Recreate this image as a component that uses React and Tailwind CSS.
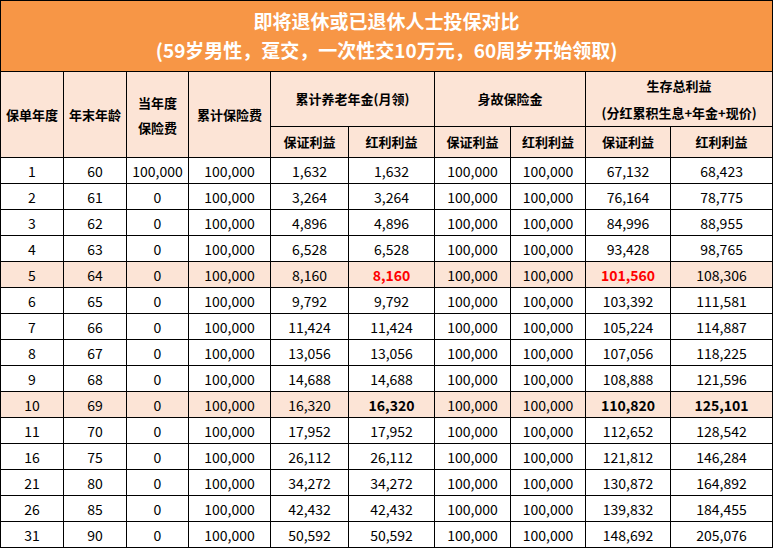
import React from 'react';

const rows = [
  ['1', '60', '100,000', '100,000', '1,632', '1,632', '100,000', '100,000', '67,132', '68,423'],
  ['2', '61', '0', '100,000', '3,264', '3,264', '100,000', '100,000', '76,164', '78,775'],
  ['3', '62', '0', '100,000', '4,896', '4,896', '100,000', '100,000', '84,996', '88,955'],
  ['4', '63', '0', '100,000', '6,528', '6,528', '100,000', '100,000', '93,428', '98,765'],
  ['5', '64', '0', '100,000', '8,160', '8,160', '100,000', '100,000', '101,560', '108,306'],
  ['6', '65', '0', '100,000', '9,792', '9,792', '100,000', '100,000', '103,392', '111,581'],
  ['7', '66', '0', '100,000', '11,424', '11,424', '100,000', '100,000', '105,224', '114,887'],
  ['8', '67', '0', '100,000', '13,056', '13,056', '100,000', '100,000', '107,056', '118,225'],
  ['9', '68', '0', '100,000', '14,688', '14,688', '100,000', '100,000', '108,888', '121,596'],
  ['10', '69', '0', '100,000', '16,320', '16,320', '100,000', '100,000', '110,820', '125,101'],
  ['11', '70', '0', '100,000', '17,952', '17,952', '100,000', '100,000', '112,652', '128,542'],
  ['16', '75', '0', '100,000', '26,112', '26,112', '100,000', '100,000', '121,812', '146,284'],
  ['21', '80', '0', '100,000', '34,272', '34,272', '100,000', '100,000', '130,872', '164,892'],
  ['26', '85', '0', '100,000', '42,432', '42,432', '100,000', '100,000', '139,832', '184,455'],
  ['31', '90', '0', '100,000', '50,592', '50,592', '100,000', '100,000', '148,692', '205,076'],
];

const widths = [63, 63, 62, 82, 78, 86, 76, 75, 85, 102];

// which cells are emphasised in the highlighted rows
const redCells = { '5': [5, 8] };
const boldCells = { '10': [5, 8, 9] };

export default function App() {
  return (
    <div
      className="w-[773px] h-[549px] bg-white text-black"
      style={{ fontFamily: '"Microsoft YaHei", "Noto Sans CJK SC", sans-serif' }}
    >
      <table className="table-fixed border-collapse w-[772px]">
        <colgroup>
          {widths.map((w, i) => (
            <col key={i} style={{ width: w }} />
          ))}
        </colgroup>
        <thead>
          <tr className="h-[71px]">
            <th
              colSpan={10}
              className="border border-black bg-[#f79646] text-white text-[19px] font-bold leading-[29px] p-0 pb-[2px]"
            >
              <div>即将退休或已退休人士投保对比</div>
              <div>(59岁男性，趸交，一次性交10万元，60周岁开始领取)</div>
            </th>
          </tr>
          <tr className="h-[52px] bg-[#fce4d6] text-[13px] font-bold">
            <th rowSpan={2} className="border border-black font-bold p-0">保单年度</th>
            <th rowSpan={2} className="border border-black font-bold p-0">年末年龄</th>
            <th rowSpan={2} className="border border-black font-bold leading-[25px] p-0">
              当年度
              <br />
              保险费
            </th>
            <th rowSpan={2} className="border border-black font-bold p-0">累计保险费</th>
            <th colSpan={2} className="border border-black font-bold p-0">累计养老年金(月领)</th>
            <th colSpan={2} className="border border-black font-bold p-0">身故保险金</th>
            <th colSpan={2} className="border border-black font-bold leading-[27px] p-0">
              生存总利益
              <br />
              (分红累积生息+年金+现价)
            </th>
          </tr>
          <tr className="h-[31px] bg-[#fce4d6] text-[13px] font-bold">
            <th className="border border-black font-bold p-0">保证利益</th>
            <th className="border border-black font-bold p-0">红利利益</th>
            <th className="border border-black font-bold p-0">保证利益</th>
            <th className="border border-black font-bold p-0">红利利益</th>
            <th className="border border-black font-bold p-0">保证利益</th>
            <th className="border border-black font-bold p-0">红利利益</th>
          </tr>
        </thead>
        <tbody>
          {rows.map((r) => {
            const hl = r[0] === '5' || r[0] === '10';
            const red = redCells[r[0]] || [];
            const bold = boldCells[r[0]] || [];
            return (
              <tr key={r[0]} className={'h-[26px] ' + (hl ? 'bg-[#fce4d6]' : 'bg-white')}>
                {r.map((v, i) => (
                  <td
                    key={i}
                    className={
                      'border border-black text-center text-[14px] leading-[24px] p-0 ' +
                      (red.includes(i) ? 'text-[#ff0000] font-bold' : '') +
                      (bold.includes(i) ? 'font-bold' : '')
                    }
                  >
                    {v}
                  </td>
                ))}
              </tr>
            );
          })}
        </tbody>
      </table>
    </div>
  );
}
